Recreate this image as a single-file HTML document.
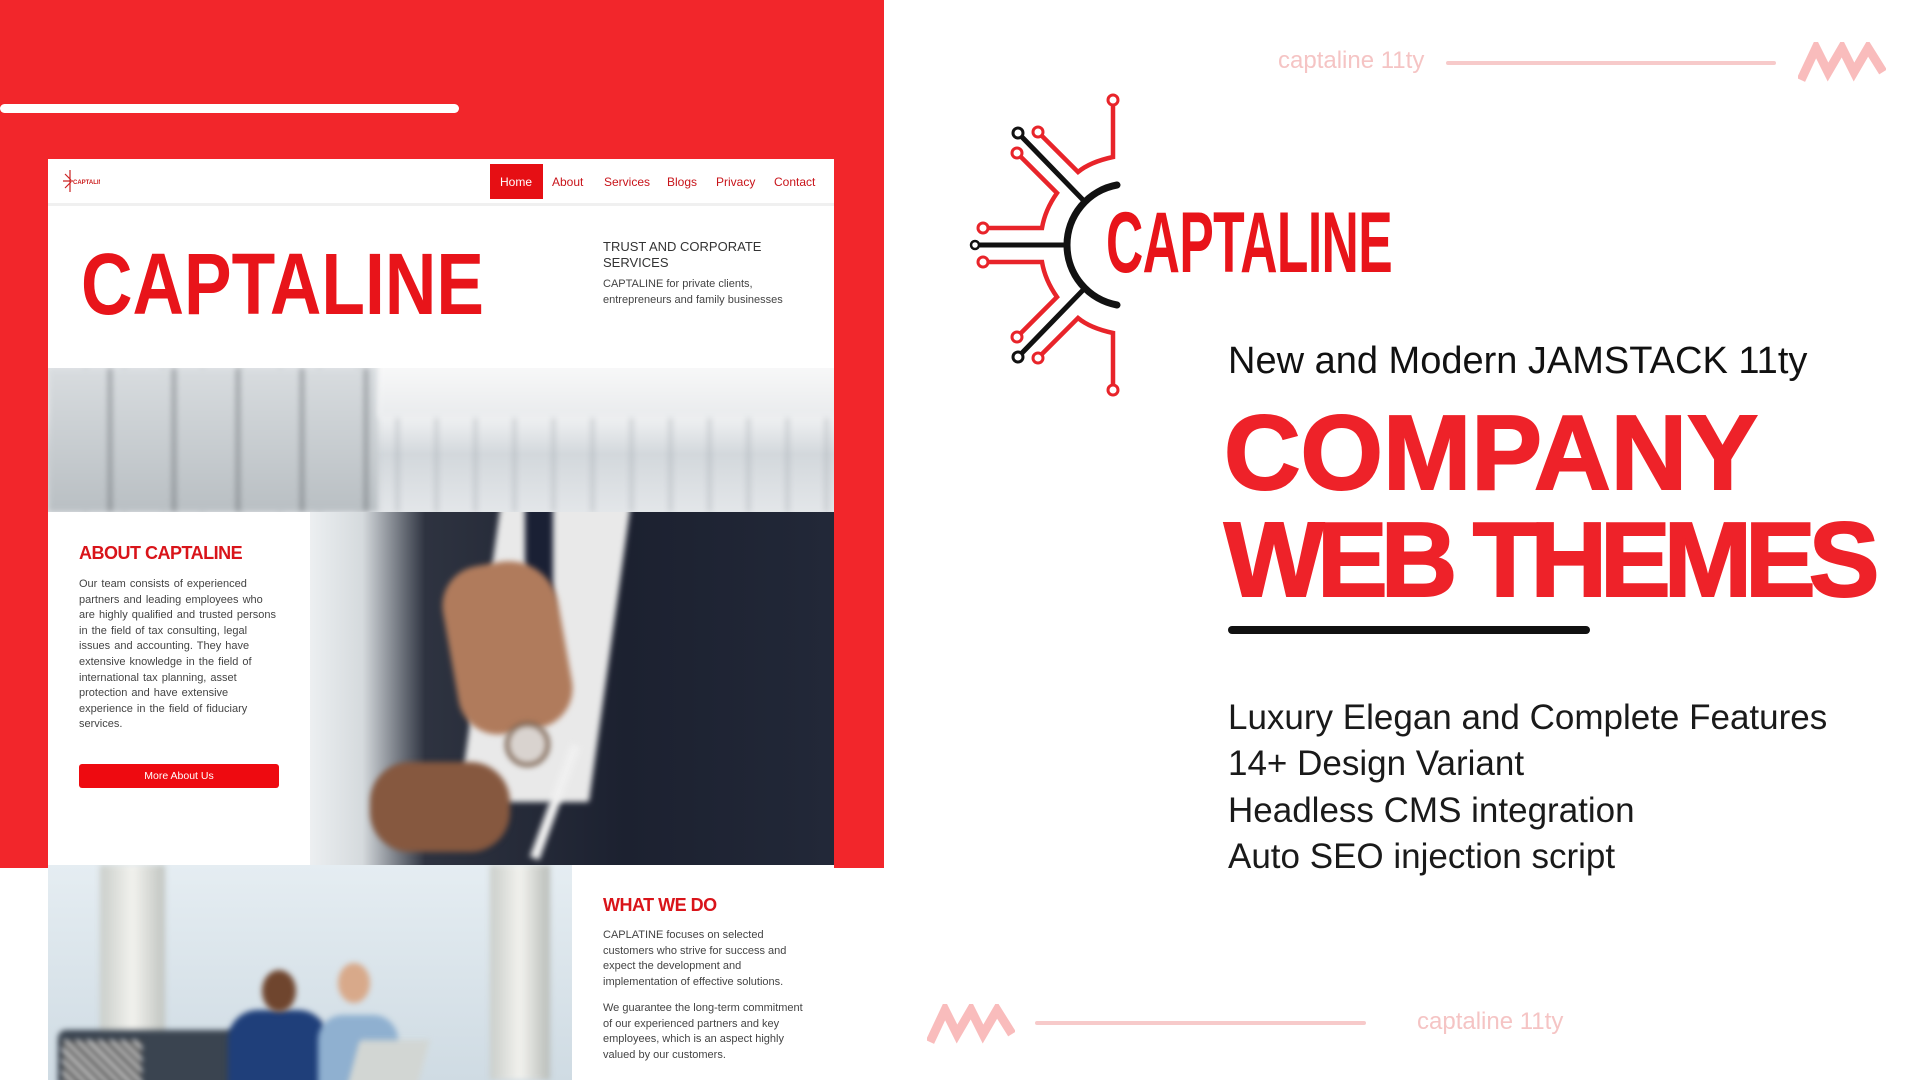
<!DOCTYPE html>
<html><head><meta charset="utf-8"><style>
*{margin:0;padding:0;box-sizing:border-box}
body{width:1920px;height:1080px;overflow:hidden;background:#fff;font-family:"Liberation Sans",sans-serif;position:relative}
.abs{position:absolute}
.red{background:#f2262b}
.b{filter:blur(3px)}
</style></head><body>
<div class="abs red" style="left:0;top:0;width:884px;height:868px"></div>
<div class="abs" style="left:0;top:104px;width:459px;height:9px;background:#fff;border-radius:5px"></div>

<!-- mockup -->
<div class="abs" style="left:48px;top:159px;width:786px;height:921px;background:#fff"></div>
<div class="abs" style="left:48px;top:203px;width:786px;height:3px;background:#f0f0f0"></div>
<svg class="abs" style="left:60px;top:168px" width="40" height="26" viewBox="0 0 40 26"><path d="M10 2v22M3 13h10M5 6l6 6M5 20l6-6" stroke="#c22" stroke-width="1.2" fill="none"/><text x="13" y="16" font-size="6" font-weight="bold" fill="#c22" font-family="Liberation Sans">CAPTALINE</text></svg>
<div class="abs" style="left:490px;top:164px;width:53px;height:35px;background:#e60f14"></div>
<div class="abs" style="top:175px;font-size:12px;color:#fff;left:500px">Home</div>
<div class="abs" style="top:175px;font-size:12px;color:#c8141a;left:552px">About</div>
<div class="abs" style="top:175px;font-size:12px;color:#c8141a;left:604px">Services</div>
<div class="abs" style="top:175px;font-size:12px;color:#c8141a;left:667px">Blogs</div>
<div class="abs" style="top:175px;font-size:12px;color:#c8141a;left:716px">Privacy</div>
<div class="abs" style="top:175px;font-size:12px;color:#c8141a;left:774px">Contact</div>

<div class="abs" style="left:81px;top:235px;font-size:87px;font-weight:bold;color:#e8141a;transform:scaleX(.82);transform-origin:0 0;line-height:100px">CAPTALINE</div>
<div class="abs" style="left:603px;top:239px;font-size:13px;color:#333;line-height:16px">TRUST AND CORPORATE<br>SERVICES</div>
<div class="abs" style="left:603px;top:276px;font-size:11px;color:#444;line-height:16px">CAPTALINE for private clients,<br>entrepreneurs and family businesses</div>

<!-- building -->
<div class="abs" style="left:48px;top:368px;width:786px;height:144px;overflow:hidden;background:linear-gradient(180deg,#e4e7ea 0,#f4f5f6 30%,#d3d8dc 60%,#e3e6e9 100%)">
<div class="abs b" style="left:0;top:0;width:786px;height:144px;background:repeating-linear-gradient(90deg,rgba(255,255,255,0) 0 36px,rgba(150,158,165,.45) 36px 39px)"></div>
<div class="abs b" style="left:0;top:0;width:330px;height:144px;background:repeating-linear-gradient(90deg,rgba(0,0,0,0) 0 60px,rgba(90,95,100,.5) 60px 64px),linear-gradient(180deg,#d8dcdf,#b9bfc3)"></div>
<div class="abs b" style="left:330px;top:-10px;width:470px;height:60px;background:linear-gradient(180deg,#fafafa,#e9ebed)"></div>
</div>

<!-- about -->
<div class="abs" style="left:79px;top:543px;font-size:18px;font-weight:bold;color:#d9141a;letter-spacing:-.5px">ABOUT CAPTALINE</div>
<div class="abs" style="left:79px;top:577px;width:200px;font-size:11px;color:#444;line-height:15.6px;word-spacing:1px">Our team consists of experienced partners and leading employees who are highly qualified and trusted persons in the field of tax consulting, legal issues and accounting. They have extensive knowledge in the field of international tax planning, asset protection and have extensive experience in the field of fiduciary services.</div>
<div class="abs" style="left:79px;top:764px;width:200px;height:24px;background:#ee0a10;border-radius:3px;color:#fff;font-size:10.5px;text-align:center;line-height:24px">More About Us</div>

<!-- man image -->
<div class="abs" style="left:310px;top:512px;width:524px;height:353px;overflow:hidden;background:linear-gradient(90deg,#eceff1 0,#d5dadd 10%,#2e3340 22%,#1c2130 60%,#222838 100%)">
<div class="abs b" style="left:170px;top:-10px;width:130px;height:300px;background:#e9e9e9;transform:skewX(-8deg)"></div>
<div class="abs b" style="left:215px;top:-10px;width:28px;height:160px;background:#1a2034"></div>
<div class="abs b" style="left:140px;top:50px;width:115px;height:170px;background:#b07b5c;border-radius:40px 50px 40px 40px;transform:rotate(-10deg)"></div>
<div class="abs b" style="left:195px;top:210px;width:45px;height:45px;background:#d9d3cf;border-radius:50%;border:4px solid #7b6250"></div>
<div class="abs b" style="left:60px;top:250px;width:140px;height:90px;background:#86583f;border-radius:40px"></div>
<div class="abs b" style="left:240px;top:230px;width:10px;height:120px;background:#f0f0f0;transform:rotate(20deg)"></div>
</div>

<!-- bottom image -->
<div class="abs" style="left:48px;top:865px;width:524px;height:215px;overflow:hidden;background:linear-gradient(180deg,#e5edf2,#cfdbe3)">
<div class="abs b" style="left:20px;top:170px;width:90px;height:60px;background:#8e99a3"></div>
<div class="abs b" style="left:52px;top:0;width:65px;height:215px;background:linear-gradient(90deg,#c9cdc9,#f2f2ee,#c0c4c0)"></div>
<div class="abs b" style="left:442px;top:0;width:60px;height:215px;background:linear-gradient(90deg,#c9cdc9,#f2f2ee,#b8bcb8)"></div>
<div class="abs b" style="left:10px;top:165px;width:300px;height:60px;background:#3a4450;border-radius:8px"></div>
<div class="abs b" style="left:14px;top:175px;width:80px;height:45px;background:repeating-linear-gradient(45deg,#eee 0 4px,#333 4px 8px)"></div>
<div class="abs b" style="left:180px;top:145px;width:100px;height:80px;background:#1f3f7a;border-radius:30px 30px 0 0"></div>
<div class="abs b" style="left:214px;top:105px;width:34px;height:42px;background:#6f452e;border-radius:50%"></div>
<div class="abs b" style="left:270px;top:150px;width:80px;height:75px;background:#8fb0d0;border-radius:25px 25px 0 0"></div>
<div class="abs b" style="left:290px;top:98px;width:32px;height:40px;background:#d8a98a;border-radius:50%"></div>
<div class="abs b" style="left:305px;top:175px;width:70px;height:50px;background:#d2d6d3;transform:skewX(-15deg)"></div>
</div>
<div class="abs" style="left:603px;top:895px;font-size:18px;font-weight:bold;color:#d9141a;letter-spacing:-.5px">WHAT WE DO</div>
<div class="abs" style="left:603px;top:928px;width:205px;font-size:11px;color:#444;line-height:15.6px">CAPLATINE focuses on selected customers who strive for success and expect the development and implementation of effective solutions.</div>
<div class="abs" style="left:603px;top:1001px;width:205px;font-size:11px;color:#444;line-height:15.6px">We guarantee the long-term commitment of our experienced partners and key employees, which is an aspect highly valued by our customers.</div>

<!-- right top deco -->
<div class="abs" style="left:1278px;top:47px;font-size:24px;color:#f5c4c4">captaline 11ty</div>
<div class="abs" style="left:1446px;top:61px;width:330px;height:4px;background:#f7caca;border-radius:2px"></div>
<svg class="abs" style="left:1798px;top:42px" width="88" height="40" viewBox="0 0 88 40"><path d="M3 38L18 6 30 30 44 6 56 30 70 6 85 30" stroke="#f9bcbc" stroke-width="9" fill="none" stroke-linejoin="miter"/></svg>

<!-- logo -->
<svg class="abs" style="left:960px;top:85px" width="180" height="320" viewBox="960 85 180 320">
<g fill="none" stroke-width="5" stroke-linecap="round">
<path d="M1117 185A61 61 0 0 0 1117 305" stroke="#111" stroke-width="7"/>
<path d="M976 245H1068" stroke="#111"/>
<path d="M1021 136L1085 202M1021 354L1085 288" stroke="#111"/>
<circle cx="975" cy="245" r="4" stroke="#111" stroke-width="2.5" fill="#fff"/>
<circle cx="1018" cy="133" r="5" stroke="#111" stroke-width="3" fill="#fff"/>
<circle cx="1018" cy="357" r="5" stroke="#111" stroke-width="3" fill="#fff"/>
<g stroke="#e8242a" stroke-width="4.5">
<path d="M1113 105V157Q1090 162 1078 172L1042 136"/>
<path d="M1113 385V333Q1090 328 1078 318L1042 354"/>
<path d="M1021 157L1057 193Q1045 210 1042 228H987"/>
<path d="M1021 333L1057 297Q1045 280 1042 262H987"/>
</g>
<g stroke="#e8242a" stroke-width="3" fill="#fff">
<circle cx="1113" cy="100" r="5"/><circle cx="1113" cy="390" r="5"/>
<circle cx="1038" cy="132" r="5"/><circle cx="1038" cy="358" r="5"/>
<circle cx="1017" cy="153" r="5"/><circle cx="1017" cy="337" r="5"/>
<circle cx="983" cy="228" r="5"/><circle cx="983" cy="262" r="5"/>
</g></g></svg>
<div class="abs" style="left:1106px;top:198px;font-size:86px;font-weight:bold;color:#e8141a;transform:scaleX(.6);transform-origin:0 0;line-height:90px;letter-spacing:-1px">CAPTALINE</div>

<div class="abs" style="left:1228px;top:338px;font-size:38px;color:#111;line-height:46px">New and Modern JAMSTACK 11ty</div>
<div class="abs" style="left:1224px;top:398px;font-size:106px;font-weight:900;color:#ee2229;line-height:110px;letter-spacing:0px;-webkit-text-stroke:2px #ee2229">COMPANY</div>
<div class="abs" style="left:1224px;top:505px;font-size:106px;font-weight:900;color:#ee2229;line-height:110px;letter-spacing:-7px;-webkit-text-stroke:2px #ee2229">WEB THEMES</div>
<div class="abs" style="left:1228px;top:626px;width:362px;height:8px;background:#111;border-radius:4px"></div>
<div class="abs" style="left:1228px;top:695px;font-size:35px;color:#1a1a1a;line-height:46.3px">Luxury Elegan and Complete Features<br>14+ Design Variant<br>Headless CMS integration<br>Auto SEO injection script</div>

<!-- bottom deco -->
<svg class="abs" style="left:927px;top:1004px" width="88" height="40" viewBox="0 0 88 40"><path d="M3 38L18 6 30 30 44 6 56 30 70 6 85 30" stroke="#f9bcbc" stroke-width="9" fill="none"/></svg>
<div class="abs" style="left:1035px;top:1021px;width:331px;height:4px;background:#f7caca;border-radius:2px"></div>
<div class="abs" style="left:1417px;top:1008px;font-size:24px;color:#f5c4c4">captaline 11ty</div>
</body></html>
